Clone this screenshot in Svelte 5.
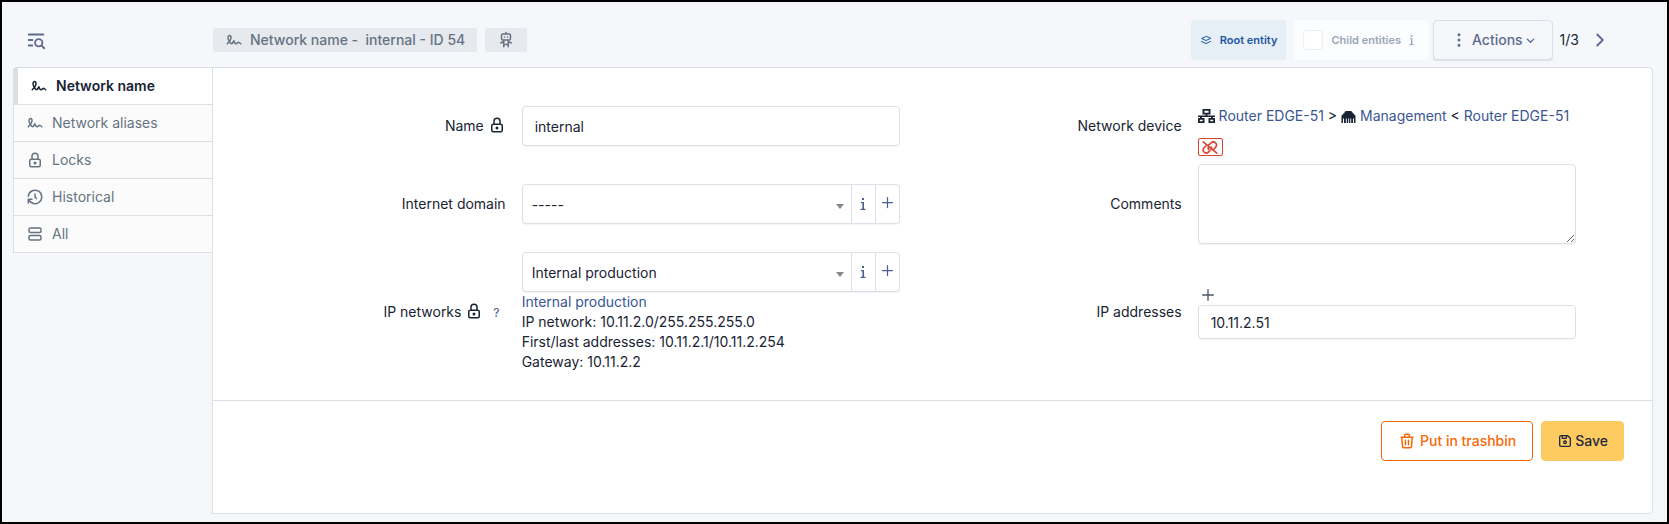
<script>
  const paths = {
    signature: 'M3 17c3.333 -3.333 5 -6 5 -8c0 -3 -1 -3 -2 -3s-2.032 1.085 -2 3c.034 2.048 1.658 4.877 2.5 6c1.5 2 2.5 2.5 3.5 1l2 -3c.333 2.667 1.333 4 3 4c.53 0 2.639 -2 3 -2c.517 0 1.517 .667 3 2',
    lock: 'M5 13a2 2 0 0 1 2 -2h10a2 2 0 0 1 2 2v6a2 2 0 0 1 -2 2h-10a2 2 0 0 1 -2 -2zM11 16a1 1 0 1 0 2 0a1 1 0 0 0 -2 0M8 11v-4a4 4 0 1 1 8 0v4',
    history: 'M12 8v4l2 2M3.05 11a9 9 0 1 1 .5 4m-.5 5v-5h5',
    list: 'M4 6a2 2 0 0 1 2 -2h12a2 2 0 0 1 2 2v2a2 2 0 0 1 -2 2h-12a2 2 0 0 1 -2 -2zM4 16a2 2 0 0 1 2 -2h12a2 2 0 0 1 2 2v2a2 2 0 0 1 -2 2h-12a2 2 0 0 1 -2 -2z',
    search: 'M11 15a4 4 0 1 0 8 0a4 4 0 1 0 -8 0M18.5 18.5l2.5 2.5M4 6h16M4 12h4M4 18h4',
    robot: 'M6 6a2 2 0 0 1 2 -2h8a2 2 0 0 1 2 2v4a2 2 0 0 1 -2 2h-8a2 2 0 0 1 -2 -2zM12 2v2M9 12v9M15 12v9M5 16l4 -2M15 14l4 2M9 18h6M10 8v.01M14 8v.01',
    stack: 'M12 5l-9 4l9 4l9 -4zM3 15l9 4l9 -4',
    dots: 'M11 5a1 1 0 1 0 2 0a1 1 0 1 0 -2 0M11 12a1 1 0 1 0 2 0a1 1 0 1 0 -2 0M11 19a1 1 0 1 0 2 0a1 1 0 1 0 -2 0',
    down: 'M5 9l7 7l7 -7',
    right: 'M9 6l6 6l-6 6',
    plus: 'M12 4v16M4 12h16',
    trash: 'M4 7h16M10 11v6M14 11v6M5 7l1 12a2 2 0 0 0 2 2h8a2 2 0 0 0 2 -2l1 -12M9 7v-3a1 1 0 0 1 1 -1h4a1 1 0 0 1 1 1v3',
    save: 'M6 4h10l4 4v10a2 2 0 0 1 -2 2h-12a2 2 0 0 1 -2 -2v-12a2 2 0 0 1 2 -2M10 14a2 2 0 1 0 4 0a2 2 0 1 0 -4 0M14 4v4h-6v-4'
  };
  const tabs = [
    { icon: 'signature', label: 'Network name' },
    { icon: 'signature', label: 'Network aliases' },
    { icon: 'lock', label: 'Locks' },
    { icon: 'history', label: 'Historical' },
    { icon: 'list', label: 'All' }
  ];
  let active = $state(0);
  let name = $state('internal');
  let comments = $state('');
  let address = $state('10.11.2.51');
</script>

{#snippet icon(key, size = 18)}
  <svg class="icon" width={size} height={size} viewBox="0 0 24 24" aria-hidden="true"><path d={paths[key]} /></svg>
{/snippet}

{#snippet info(size = 12)}
  <svg class="info" width={size / 2} height={size} viewBox="0 0 6 12" aria-hidden="true">
    <path d="M2 0h2v2H2zM1 4h3v6.800h1.500V12H.5v-1.200h1.900V5.200H1z" />
  </svg>
{/snippet}

{#snippet dropdown(id, value)}
  <div class="group">
    <div class="select">
      <select {id}><option>{value}</option></select>
    </div>
    <button type="button" class="addon" aria-label="Details">{@render info()}</button>
    <button type="button" class="addon add" aria-label="Add">{@render icon('plus', 15)}</button>
  </div>
{/snippet}

<div class="page">
  <header>
    <button class="plain filter" aria-label="Search list">{@render icon('search', 22)}</button>
    <h1 class="badge">{@render icon('signature')}<span>Network name - &nbsp;internal - ID 54</span></h1>
    <span class="badge robot">{@render icon('robot')}</span>
    <div class="tools">
      <span class="entity">{@render icon('stack', 12)}Root entity</span>
      <label class="entity child"><input type="checkbox" disabled />Child entities {@render info(10)}</label>
      <button class="actions">{@render icon('dots')}<span>Actions</span>{@render icon('down', 11)}</button>
      <span class="count">1/3</span>
      <a class="next" href="#next" aria-label="Next">{@render icon('right', 22)}</a>
    </div>
  </header>

  <div class="content">
    <nav>
      {#each tabs as tab, i}
        <button class="tab" class:active={active === i} onclick={() => (active = i)}>
          {@render icon(tab.icon)}<span>{tab.label}</span>
        </button>
      {/each}
    </nav>

    <form class="card" onsubmit={(e) => e.preventDefault()}>
      <div class="fields">
        <div class="field top">
          <label for="name">Name {@render icon('lock')}</label>
          <input id="name" bind:value={name} />
        </div>
        <div class="field top">
          <span class="label">Network device</span>
          <div class="device">
            <p>
              <svg class="solid" width="17" height="14" viewBox="0 0 17 14" aria-hidden="true">
                <path fill-rule="evenodd" d="M4.500 0h8v5.500H9.400v1H17v1.600h-2V9h2v5h-6.500V9h2.500V8.100H4V9h2.500v5H0V9h2V8.100H0V6.500h7.600v-1H4.500zM6.400 1.800v1.900h4.200V1.800zM1.800 10.700v1.500h2.900v-1.500zM12.300 10.700v1.500h2.900v-1.500z" />
              </svg>
              <a href="#router">Router EDGE-51</a> &gt;
              <svg class="solid" width="15" height="12" viewBox="0 0 14 12" aria-hidden="true">
                <path d="M0 12V4.500L1.200 4V3L3 2V1L4.500 0h5L11 1v1l1.800 1v1L14 4.500V12h-1.500V7.500h-1V12H9.700V7.500h-.9V12H7.400V7.500h-.8V12H5.200V7.500h-.9V12H2.500V7.500h-1V12z" />
              </svg>
              <a href="#management">Management</a> &lt; <a href="#router">Router EDGE-51</a>
            </p>
            <button type="button" class="unlink" aria-label="Dissociate">
              <svg class="icon" width="16" height="13" viewBox="0 0 20 16" aria-hidden="true">
                <path d="M1.500 1l17 14M8.300 4.600l2.800 -2.100a3.900 3.900 0 0 1 6 5l-2.600 3M11.800 7.500a3.800 3.800 0 0 1 -.6 3.200M4.700 6.200l-2 2.200a3.700 3.700 0 0 0 5.200 5.400l1.800 -1.200M7.600 8.300a3.800 3.800 0 0 0 1 2.600" />
              </svg>
            </button>
          </div>
        </div>

        <div class="field">
          <label for="domain">Internet domain</label>
          {@render dropdown('domain', '-----')}
        </div>
        <div class="field">
          <label for="comments">Comments</label>
          <textarea id="comments" bind:value={comments}></textarea>
        </div>

        <div class="field">
          <label for="network">IP networks {@render icon('lock')} <span class="help">?</span></label>
          <div>
            {@render dropdown('network', 'Internal production')}
            <p class="details">
              <a href="#network">Internal production</a><br />
              IP network: 10.11.2.0/255.255.255.0<br />
              First/last addresses: 10.11.2.1/10.11.2.254<br />
              Gateway: 10.11.2.2
            </p>
          </div>
        </div>
        <div class="field">
          <label for="address">IP addresses</label>
          <div>
            <button type="button" class="plain more" aria-label="Add an address">{@render icon('plus', 16)}</button>
            <input id="address" class="small" bind:value={address} />
          </div>
        </div>
      </div>

      <footer>
        <button type="button" class="btn trash">{@render icon('trash')}Put in trashbin</button>
        <button class="btn save">{@render icon('save', 16)}Save</button>
      </footer>
    </form>
  </div>
</div>

<style>
  :global(body) { margin: 0; }
  * { box-sizing: border-box; }
  .page {
    display: flex;
    flex-direction: column;
    min-height: 100vh;
    padding: 0 14px 8px 11px;
    border: 2px solid #000;
    background: #f5f7fb;
    color: #182433;
    font: 14px/20px Inter, sans-serif;
  }
  button, input, select, textarea { font: inherit; color: inherit; }
  button { cursor: pointer; padding: 0; }
  a { color: #3a5693; text-decoration: none; }
  p { margin: 0; }
  .icon {
    flex: none;
    fill: none;
    stroke: currentColor;
    stroke-width: 2;
    stroke-linecap: round;
    stroke-linejoin: round;
    vertical-align: -3px;
  }
  .info, .solid { fill: currentColor; flex: none; }
  .plain { border: 0; background: none; }

  header { display: flex; align-items: center; height: 65px; padding-top: 10px; }
  .filter { display: flex; width: 200px; padding-left: 12px; color: #5d6b8f; }
  .badge {
    display: flex;
    align-items: center;
    gap: 7px;
    height: 24px;
    margin: 0 8px 0 0;
    padding: 0 12px;
    border-radius: 2px;
    background: #e6e9ee;
    color: #667382;
    font-size: 14px;
    font-weight: 500;
  }
  .tools { display: flex; align-items: center; margin-left: auto; padding-right: 42px; }
  .entity {
    display: flex;
    align-items: center;
    gap: 8px;
    height: 40px;
    margin-right: 8px;
    padding: 0 9px;
    border-radius: 4px;
    background: #e6eef6;
    color: #1f56a0;
    font-size: 11px;
    font-weight: 600;
  }
  .child { margin-right: 4px; padding: 0 15px 0 9px; background: #fcfdfe; color: #9ba5b9; }
  .child input {
    appearance: none;
    width: 20px;
    height: 20px;
    margin: 0;
    border: 1px solid #eceef2;
    border-radius: 4px;
    background: #fff;
  }
  .actions {
    display: flex;
    align-items: center;
    height: 40px;
    padding: 0 16px;
    border: 1px solid #dadfe8;
    border-radius: 4px;
    background: #f5f7fb;
    box-shadow: 0 1px 1px #1824331a;
    color: #5d6b8f;
    font-weight: 500;
  }
  .actions span { margin: 0 2px 0 4px; }
  .actions .icon:last-child { stroke-width: 3; margin-top: 2px; }
  .count { margin: 0 10px 0 7px; }
  .next { display: flex; color: #5d6b8f; }

  .content { display: flex; flex: 1; }
  nav { width: 199px; flex: none; }
  .tab {
    display: flex;
    align-items: center;
    gap: 8px;
    width: 100%;
    height: 37px;
    padding: 0 12px;
    border: solid #dadfe5;
    border-width: 0 0 1px 1px;
    background: #fbfbfb;
    color: #667382;
  }
  .tab.active {
    height: 38px;
    border-width: 1px 0 1px 5px;
    border-radius: 4px 0 0 0;
    background: #fff;
    color: #182433;
    font-weight: 600;
  }
  .card {
    flex: 1;
    min-width: 0;
    border: 1px solid #dadfe5;
    border-radius: 0 4px 4px 0;
    background: #fff;
  }
  .fields {
    display: grid;
    grid-template-columns: 1fr 1fr;
    row-gap: 8px;
    padding: 38px 68px 28px 19px;
    border-bottom: 1px solid #dadfe5;
  }
  .field {
    display: grid;
    grid-template-columns: 5fr 7fr;
    align-items: center;
    min-width: 0;
  }
  .field > :last-child { margin: 0 8px; }
  .top { align-items: start; min-height: 50px; }
  .top > :first-child { padding: 10px 8px; }
  label, .label { padding: 0 8px; text-align: right; }
  .help { margin: 0 6px; color: #5a6b93; font-size: 12px; font-weight: 500; }
  .fields input, textarea, .group {
    border: 1px solid #dadfe8;
    border-radius: 4px;
    background: #fff;
    box-shadow: 0 1px 1px #1824330d;
  }
  .fields input { height: 40px; padding: 0 12px; min-width: 0; }
  .fields input.small { display: block; width: 100%; height: 34px; }
  textarea { display: block; height: 80px; padding: 8px 12px; resize: vertical; }
  .group { display: flex; height: 40px; }
  .select { display: flex; flex: 1; position: relative; }
  .select::after {
    content: '';
    position: absolute;
    right: 7px;
    top: 19px;
    border: 4px solid transparent;
    border-top: 5px solid #888;
    border-bottom: 0;
    pointer-events: none;
  }
  select { appearance: none; flex: 1; border: 0; background: none; padding: 1px 9px 0; }
  .addon {
    display: flex;
    align-items: center;
    justify-content: center;
    width: 24px;
    border: 0;
    border-left: 1px solid #dadfe8;
    background: none;
    color: #4a6090;
  }
  .add { padding-bottom: 4px; }
  .device { white-space: nowrap; }
  .solid { vertical-align: -2px; }
  .unlink {
    display: flex;
    align-items: center;
    justify-content: center;
    width: 25px;
    height: 18px;
    margin-top: 12px;
    border: 1px solid #d9432f;
    border-radius: 2px;
    background: #fff;
    color: #d9432f;
  }
  .more { display: flex; height: 20px; align-items: center; padding-left: 2px; color: #4b5563; }

  footer { display: flex; justify-content: flex-end; gap: 8px; padding: 20px 28px 52px; }
  .btn {
    display: flex;
    align-items: center;
    justify-content: center;
    gap: 4px;
    height: 40px;
    padding: 0 16px;
    border: 1px solid #f76707;
    border-radius: 4px;
    background: #fff;
    color: #f76707;
    font-weight: 500;
  }
  .save { gap: 2px; padding: 0 15px; border-color: #fecb62; background: #fecb62; color: #1e293b; }
</style>
